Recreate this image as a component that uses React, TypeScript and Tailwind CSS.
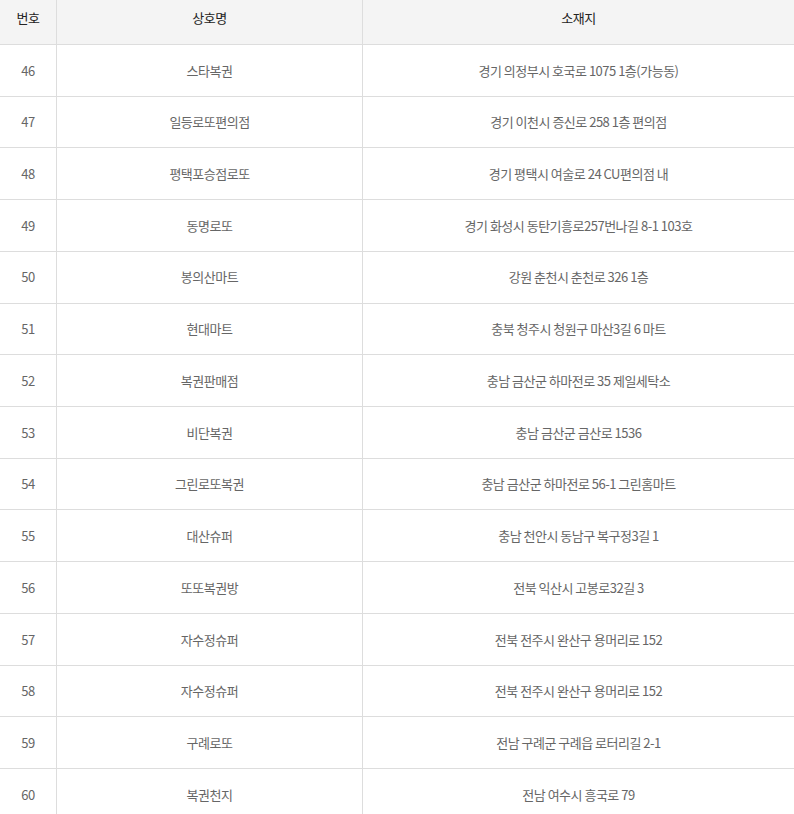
import React from "react";

const rows: [string, string, string][] = [
  ["46", "스타복권", "경기 의정부시 호국로 1075 1층(가능동)"],
  ["47", "일등로또편의점", "경기 이천시 증신로 258 1층 편의점"],
  ["48", "평택포승점로또", "경기 평택시 여술로 24 CU편의점 내"],
  ["49", "동명로또", "경기 화성시 동탄기흥로257번나길 8-1 103호"],
  ["50", "봉의산마트", "강원 춘천시 춘천로 326 1층"],
  ["51", "현대마트", "충북 청주시 청원구 마산3길 6 마트"],
  ["52", "복권판매점", "충남 금산군 하마전로 35 제일세탁소"],
  ["53", "비단복권", "충남 금산군 금산로 1536"],
  ["54", "그린로또복권", "충남 금산군 하마전로 56-1 그린홈마트"],
  ["55", "대산슈퍼", "충남 천안시 동남구 복구정3길 1"],
  ["56", "또또복권방", "전북 익산시 고봉로32길 3"],
  ["57", "자수정슈퍼", "전북 전주시 완산구 용머리로 152"],
  ["58", "자수정슈퍼", "전북 전주시 완산구 용머리로 152"],
  ["59", "구례로또", "전남 구례군 구례읍 로터리길 2-1"],
  ["60", "복권천지", "전남 여수시 흥국로 79"],
];

export default function App() {
  return (
    <div
      className="w-[794px] h-[814px] overflow-hidden bg-white text-[13px] tracking-[-0.5px]"
      style={{ fontFamily: '"Noto Sans CJK KR", "Noto Sans", sans-serif' }}
    >
      <div className="grid grid-cols-[57px_306px_1fr] h-[45px] bg-[#f4f4f4] border-b border-[#dddddd] text-[#222222]">
        <div className="flex items-center justify-center pb-[9px] border-r border-[#dddddd]">번호</div>
        <div className="flex items-center justify-center pb-[9px] border-r border-[#dddddd]">상호명</div>
        <div className="flex items-center justify-center pb-[9px]">소재지</div>
      </div>
      {rows.map(([n, name, addr]) => (
        <div
          key={n}
          className="grid grid-cols-[57px_306px_1fr] h-[51.72px] border-b border-[#dddddd] text-[#666666]"
        >
          <div className="flex items-center justify-center border-r border-[#dddddd]">{n}</div>
          <div className="flex items-center justify-center border-r border-[#dddddd]">{name}</div>
          <div className="flex items-center justify-center">{addr}</div>
        </div>
      ))}
    </div>
  );
}
